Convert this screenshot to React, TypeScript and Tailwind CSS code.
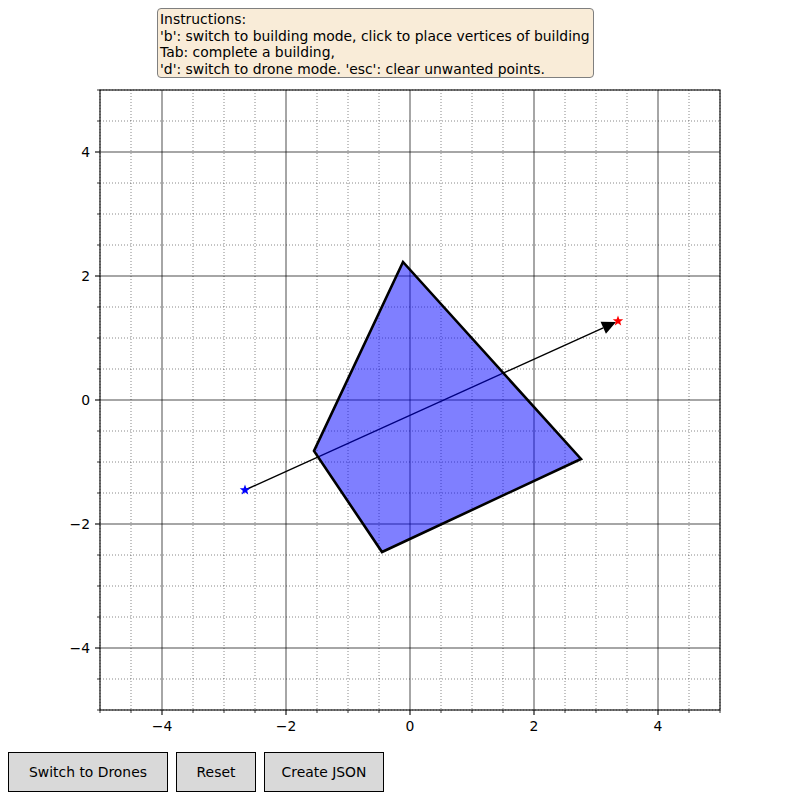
import React from "react";

const FONT = { fontFamily: '"DejaVu Sans", Verdana, sans-serif' };

// data -> pixel (axes 100..720 / 90..710, range -5..5)
const px = (x: number) => 410 + x * 62;
const py = (y: number) => 400 - y * 62;

const steps = Array.from({ length: 21 }, (_, i) => -5 + i * 0.5);
const majors = [-4, -2, 0, 2, 4];

function star(cx: number, cy: number, r: number) {
  const pts: string[] = [];
  for (let i = 0; i < 10; i++) {
    const a = -Math.PI / 2 + (i * Math.PI) / 5;
    const rr = i % 2 === 0 ? r : r * 0.42;
    pts.push(`${(cx + rr * Math.cos(a)).toFixed(2)},${(cy + rr * Math.sin(a)).toFixed(2)}`);
  }
  return pts.join(" ");
}

function Plot() {
  const start = { x: 245, y: 490 };
  const tip = { x: 616, y: 322 };
  const dx = tip.x - start.x;
  const dy = tip.y - start.y;
  const len = Math.hypot(dx, dy);
  const ux = dx / len;
  const uy = dy / len;
  const bx = tip.x - ux * 14;
  const by = tip.y - uy * 14;
  const head = `${tip.x},${tip.y} ${bx - uy * 6.5},${by + ux * 6.5} ${bx + uy * 6.5},${by - ux * 6.5}`;

  return (
    <svg width={800} height={660} viewBox="0 80 800 660" className="block" style={FONT}>
      {/* grid */}
      {steps.map((v) =>
        majors.includes(v) ? null : (
          <g key={`m${v}`} stroke="#000" strokeWidth={0.55} strokeDasharray="1 2" opacity={0.85}>
            <line x1={px(v)} y1={90} x2={px(v)} y2={710} />
            <line x1={100} y1={py(v)} x2={720} y2={py(v)} />
          </g>
        )
      )}
      {majors.map((v) => (
        <g key={`M${v}`} stroke="#000" strokeWidth={0.7}>
          <line x1={px(v)} y1={90} x2={px(v)} y2={710} />
          <line x1={100} y1={py(v)} x2={720} y2={py(v)} />
        </g>
      ))}

      {/* drone path */}
      <line x1={start.x} y1={start.y} x2={bx} y2={by} stroke="#000" strokeWidth={1.4} />
      <polygon points={head} fill="#000" />

      {/* building */}
      <polygon
        points="403,262 314,451 382,552 581,459"
        fill="rgba(0,0,255,0.5)"
        stroke="#000"
        strokeWidth={2.6}
        strokeLinejoin="miter"
      />

      <polygon points={star(245, 490, 5.5)} fill="#0000ff" />
      <polygon points={star(618, 321, 5.5)} fill="#ff0000" />

      {/* spines */}
      <rect x={100} y={90} width={620} height={620} fill="none" stroke="#000" strokeWidth={1.1} />

      {/* ticks */}
      {steps.map((v) => {
        const major = majors.includes(v);
        const l = major ? 5 : 3;
        const w = major ? 1.1 : 0.8;
        return (
          <g key={`t${v}`} stroke="#000" strokeWidth={w}>
            <line x1={px(v)} y1={710} x2={px(v)} y2={710 + l} />
            <line x1={100 - l} y1={py(v)} x2={100} y2={py(v)} />
          </g>
        );
      })}

      {majors.map((v) => (
        <g key={`l${v}`} fontSize={13.9} fill="#000">
          <text x={px(v)} y={731} textAnchor="middle">
            {v < 0 ? `\u2212${-v}` : `${v}`}
          </text>
          <text x={90} y={py(v) + 5} textAnchor="end">
            {v < 0 ? `\u2212${-v}` : `${v}`}
          </text>
        </g>
      ))}
    </svg>
  );
}

export default function App() {
  const buttons = [
    { label: "Switch to Drones", w: "w-[160px]" },
    { label: "Reset", w: "w-[80px]" },
    { label: "Create JSON", w: "w-[120px]" },
  ];

  return (
    <div className="relative flex h-[800px] w-[800px] flex-col bg-white text-black" style={FONT}>
      <div className="ml-[157px] mt-[8px] h-[70px] w-[437px] rounded-[4px] border border-[#7f7f7f] bg-[#f9ecd8] pl-[2px] pt-[2px] text-[13.9px] leading-[16.6px] whitespace-pre">
        {"Instructions:\n'b': switch to building mode, click to place vertices of building\nTab: complete a building,\n'd': switch to drone mode. 'esc': clear unwanted points."}
      </div>

      <div className="mt-[2px]">
        <Plot />
      </div>

      <div className="mt-[12px] flex gap-2 pl-2">
        {buttons.map((b) => (
          <button
            key={b.label}
            className={`${b.w} flex h-[40px] items-center justify-center border border-black bg-[#d9d9d9] text-[13.9px]`}
          >
            {b.label}
          </button>
        ))}
      </div>
    </div>
  );
}
